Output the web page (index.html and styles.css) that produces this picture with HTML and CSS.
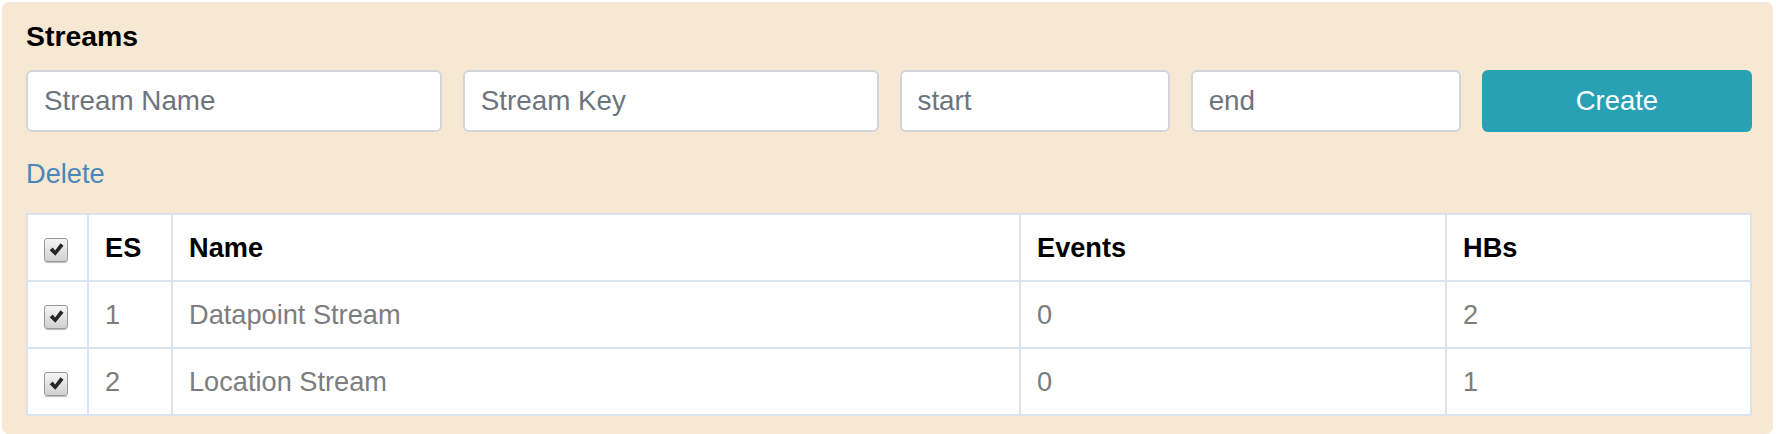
FILE: index.html
```html
<!DOCTYPE html>
<html lang="en">
<head>
<meta charset="utf-8">
<title>Streams</title>
<link rel="stylesheet" href="styles.css">
</head>
<body>
<div class="panel">
  <h2 class="panel-title">Streams</h2>
  <form class="form-row">
    <div class="col col-3"><input class="field" type="text" placeholder="Stream Name"></div>
    <div class="col col-3"><input class="field" type="text" placeholder="Stream Key"></div>
    <div class="col col-2"><input class="field" type="text" placeholder="start"></div>
    <div class="col col-2"><input class="field" type="text" placeholder="end"></div>
    <div class="col col-2"><button class="btn-create" type="button">Create</button></div>
  </form>
  <a class="delete-link" href="#">Delete</a>
  <table class="streams-table">
    <colgroup>
      <col class="c-check"><col class="c-es"><col class="c-name"><col class="c-events"><col class="c-hbs">
    </colgroup>
    <thead>
      <tr>
        <th><span class="check"><svg viewBox="0 0 16 16" width="17" height="17"><path d="M1.6 8.8 L4.4 6.2 L6.7 8.9 L11.8 2.2 L14.6 4.5 L6.9 13.8 Z" fill="#262626"/></svg></span></th>
        <th>ES</th>
        <th>Name</th>
        <th>Events</th>
        <th>HBs</th>
      </tr>
    </thead>
    <tbody>
      <tr>
        <td><span class="check"><svg viewBox="0 0 16 16" width="17" height="17"><path d="M1.6 8.8 L4.4 6.2 L6.7 8.9 L11.8 2.2 L14.6 4.5 L6.9 13.8 Z" fill="#262626"/></svg></span></td>
        <td>1</td>
        <td>Datapoint Stream</td>
        <td>0</td>
        <td>2</td>
      </tr>
      <tr>
        <td><span class="check"><svg viewBox="0 0 16 16" width="17" height="17"><path d="M1.6 8.8 L4.4 6.2 L6.7 8.9 L11.8 2.2 L14.6 4.5 L6.9 13.8 Z" fill="#262626"/></svg></span></td>
        <td>2</td>
        <td>Location Stream</td>
        <td>0</td>
        <td>1</td>
      </tr>
    </tbody>
  </table>
</div>
</body>
</html>
```
FILE: styles.css
```css
html, body {
  margin: 0;
  padding: 0;
  background: #ffffff;
}

body {
  font-family: "Liberation Sans", Arial, sans-serif;
  font-size: 27.2px;
  line-height: 1.5;
  color: #212529;
}

.panel {
  margin: 2px 3px 2px 2px;
  padding: 17px 21px 18px 24px;
  background: #f7e8d4;
  border-radius: 7px;
}

.panel-title {
  margin: 0;
  font-size: 28.4px;
  line-height: 34px;
  font-weight: 700;
  color: #000;
}

.form-row {
  display: flex;
  margin: 17px -10.5px 0;
}

.col {
  box-sizing: border-box;
  padding: 0 10.5px;
}

.col-3 { width: 25%; }
.col-2 { width: 16.6667%; }

.field {
  display: block;
  box-sizing: border-box;
  width: 100%;
  height: 62px;
  margin: 0;
  padding: 0 16px;
  font-family: inherit;
  font-size: 27.8px;
  color: #495057;
  background: #fff;
  border: 2px solid #d0d5dc;
  border-radius: 6px;
  outline: none;
}

.field::placeholder {
  color: #6c757d;
  opacity: 1;
}

.btn-create {
  display: block;
  box-sizing: border-box;
  width: 100%;
  height: 62px;
  margin: 0;
  padding: 0;
  font-family: inherit;
  font-size: 27.4px;
  color: #fff;
  background: #29a1b4;
  border: 0;
  border-radius: 6px;
}

.delete-link {
  display: block;
  width: max-content;
  margin-top: 22px;
  color: #4a86b9;
  text-decoration: none;
  line-height: 40.8px;
}

.streams-table {
  width: 100%;
  margin-top: 18px;
  border-collapse: collapse;
  background: #fff;
  table-layout: fixed;
}

.c-check { width: 61px; }
.c-es { width: 84px; }
.c-name { width: 848px; }
.c-events { width: 426px; }
.c-hbs { width: auto; }

.streams-table th,
.streams-table td {
  border: 2px solid #d9e4ef;
  padding: 12px 16px;
  height: 41px;
  line-height: 41px;
  text-align: left;
  vertical-align: middle;
}

.streams-table th {
  font-weight: 700;
  color: #000;
}

.streams-table td {
  color: #7d7d7d;
}

.check {
  display: inline-flex;
  align-items: center;
  justify-content: center;
  box-sizing: border-box;
  width: 24px;
  height: 24px;
  vertical-align: middle;
  border: 1px solid #9a9a9a;
  border-radius: 3px;
  background: linear-gradient(#f6f6f6, #d0d0d0);
  box-shadow: 0 2px 1px -1px rgba(0, 0, 0, 0.28);
}

.check svg {
  display: block;
}
```
